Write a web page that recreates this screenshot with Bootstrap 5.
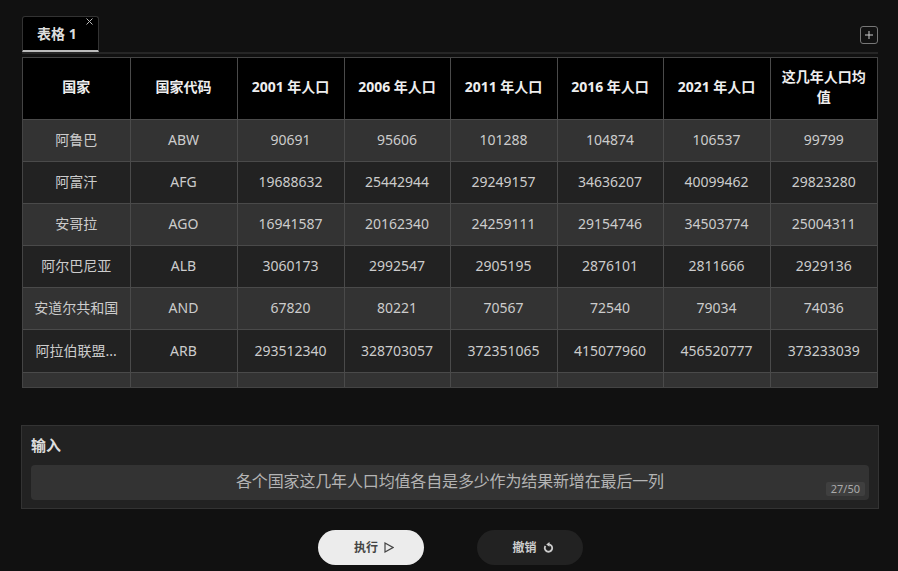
<!DOCTYPE html>
<html lang="zh">
<head>
  <meta charset="UTF-8" />
  <meta name="viewport" content="width=device-width, initial-scale=1.0" />
  <title>表格</title>
  <link href="https://cdn.jsdelivr.net/npm/bootstrap@5.3.0/dist/css/bootstrap.min.css" rel="stylesheet">
  <style>
    html, body { height: 100%; }
    body { background: #111; color: #ccc; font-family: "Noto Sans", "Noto Sans CJK SC", sans-serif; font-size: 14px; overflow: hidden; }
    .page-wrap { padding: 18px 20px 0 22px; }
    .tab-bar { height: 36px; border-bottom: 2px solid #262626; width: 856px; }
    .sheet-tab { position: relative; width: 77px; height: 36px; background: #000; border: 1px solid #333; border-bottom: 2px solid #bbb; border-radius: 3px 3px 0 0; color: #ddd; font-weight: 700; padding-left: 14px; line-height: 33px; }
    .tab-x { position: absolute; top: 1px; right: 5px; width: 7px; height: 7px; }
    .add-btn { width: 18px; height: 18px; border: 1px solid #777; border-radius: 3px; margin-bottom: 8px; }
    .sheet-box { width: 856px; height: 331px; margin-top: 3px; overflow: hidden; border: 1px solid #444; }
    .sheet { table-layout: fixed; width: 854px; border-collapse: collapse; margin: 0; }
    .sheet th, .sheet td { border: 1px solid #4a4a4a; text-align: center; vertical-align: middle; padding: 0 8px 2px; color: #ccc; background: transparent; box-shadow: none; }
    .sheet tr > :first-child { border-left: 0; }
    .sheet tr > :last-child { border-right: 0; }
    .sheet thead tr > * { border-top: 0; }
    .sheet th { height: 61px; background: #000; color: #eee; font-weight: 700; line-height: 20px; }
    .sheet td { height: 42.2px; white-space: nowrap; overflow: hidden; text-overflow: ellipsis; }
    .sheet tbody tr:nth-child(odd) td { background: #333; }
    .sheet tbody tr:nth-child(even) td { background: #222; }
    .col-wide { width: 107px; }
    .col-narrow { width: 106px; }
    .input-panel { width: 858px; height: 84px; margin: 37px 0 0 -1px; padding: 9px 9px 0; background: #222; border: 1px solid #333; }
    .input-label { font-size: 15px; font-weight: 700; color: #ddd; line-height: 20px; margin-bottom: 10px; }
    .input-box { position: relative; height: 35px; background: #333; border-radius: 4px; text-align: center; font-size: 16px; letter-spacing: -.15px; line-height: 32px; color: #b4b4b4; }
    .char-count { position: absolute; right: 4px; bottom: 4px; padding: 0 5px; background: #3f3f3f; border-radius: 2px; font-size: 11px; letter-spacing: 0; line-height: 14px; color: #aaa; }
    .action-row { margin-top: 21px; gap: 53px; }
    .pill-btn { width: 106px; height: 35px; border-radius: 18px; font-size: 12px; font-weight: 700; border: 0; padding: 0 0 0 7px; gap: 6px; }
    .pill-run { background: #ececec; color: #444; }
    .pill-undo { background: #222; color: #ccc; }
  </style>
</head>
<body>
  <div class="page-wrap">
    <div class="tab-bar d-flex justify-content-between align-items-end">
      <div class="sheet-tab">表格 1
        <svg class="tab-x" viewBox="0 0 7 7"><path d="M.5.5l6 6M6.5.5l-6 6" stroke="#bbb" stroke-width="1" fill="none"/></svg>
      </div>
      <div class="add-btn d-flex align-items-center justify-content-center">
        <svg width="10" height="10" viewBox="0 0 10 10"><path d="M5 1v8M1 5h8" stroke="#ccc" stroke-width="1" fill="none"/></svg>
      </div>
    </div>

    <div class="sheet-box">
      <table class="table sheet">
        <colgroup>
          <col class="col-wide"><col class="col-wide"><col class="col-wide"><col class="col-narrow"><col class="col-wide"><col class="col-narrow"><col class="col-wide"><col class="col-wide">
        </colgroup>
        <thead>
          <tr><th>国家</th><th>国家代码</th><th>2001 年人口</th><th>2006 年人口</th><th>2011 年人口</th><th>2016 年人口</th><th>2021 年人口</th><th>这几年人口均值</th></tr>
        </thead>
        <tbody id="filas"></tbody>
      </table>
    </div>

    <div class="input-panel">
      <div class="input-label">输入</div>
      <div class="input-box">各个国家这几年人口均值各自是多少作为结果新增在最后一列
        <span class="char-count">27/50</span>
      </div>
    </div>

    <div class="action-row d-flex justify-content-center">
      <button class="btn pill-btn pill-run d-flex align-items-center justify-content-center">执行
        <svg width="10" height="11" viewBox="0 0 10 11"><path d="M1 1l8 4.5-8 4.5z" stroke="#444" stroke-width="1.2" fill="none"/></svg>
      </button>
      <button class="btn pill-btn pill-undo d-flex align-items-center justify-content-center">撤销
        <svg width="11" height="11" viewBox="0 0 11 11"><path d="M6 2.4a3.7 3.7 0 1 1-3.6 1.6" stroke="#ccc" stroke-width="1.8" fill="none"/><path d="M6.5 0v4.8L3.2 2.4z" fill="#ccc"/></svg>
      </button>
    </div>
  </div>

  <script>
    const datos = [
      ['阿鲁巴','ABW',90691,95606,101288,104874,106537,99799],
      ['阿富汗','AFG',19688632,25442944,29249157,34636207,40099462,29823280],
      ['安哥拉','AGO',16941587,20162340,24259111,29154746,34503774,25004311],
      ['阿尔巴尼亚','ALB',3060173,2992547,2905195,2876101,2811666,2929136],
      ['安道尔共和国','AND',67820,80221,70567,72540,79034,74036],
      ['阿拉伯联盟...','ARB',293512340,328703057,372351065,415077960,456520777,373233039],
      ['','','','','','','','']
    ];
    const tbody = document.getElementById('filas');
    datos.forEach(d => {
      const fila = document.createElement('tr');
      fila.innerHTML = d.map(v => `<td>${v}</td>`).join('');
      tbody.appendChild(fila);
    });
  </script>
  <script src="https://cdn.jsdelivr.net/npm/bootstrap@5.3.0/dist/js/bootstrap.bundle.min.js"></script>
</body>
</html>
